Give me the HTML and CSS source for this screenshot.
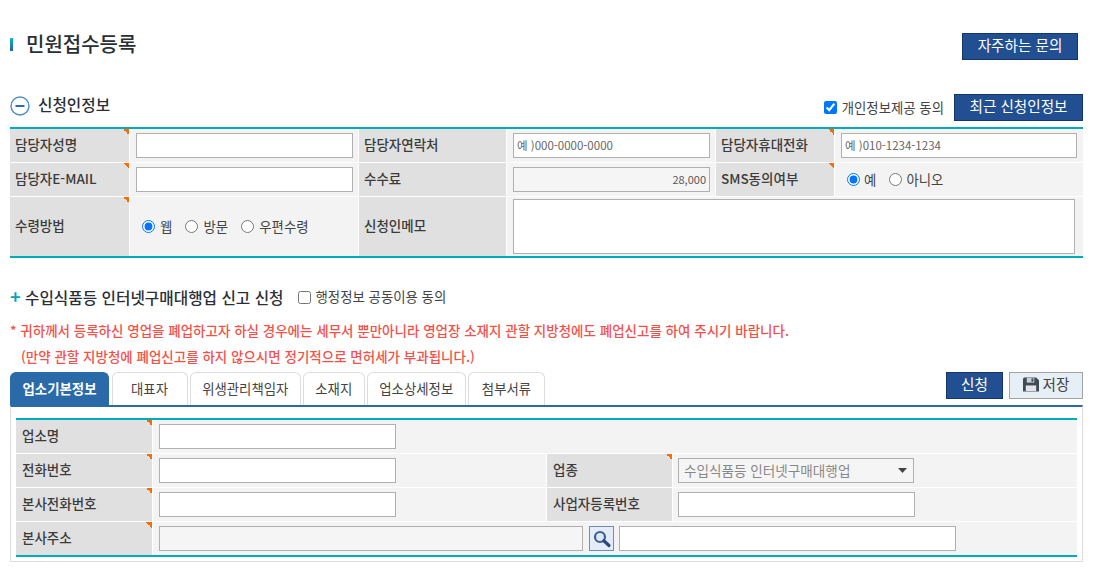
FILE: index.html
```html
<!DOCTYPE html>
<html lang="ko">
<head>
<meta charset="utf-8">
<title>민원접수등록</title>
<link rel="stylesheet" href="styles.css">
</head>
<body>
<div class="page">
  <header class="page-head">
    <h1 class="page-title"><span class="title-bar"></span>민원접수등록</h1>
    <button class="btn btn-navy btn-faq" type="button">자주하는 문의</button>
  </header>

  <section class="applicant">
    <div class="section-head">
      <h2 class="section-title">
        <svg class="minus-icon" width="20" height="20" viewBox="0 0 20 20"><circle cx="10" cy="10" r="9" fill="#fff" stroke="#4f8fcb" stroke-width="1.4"/><rect x="5.5" y="9" width="9" height="2" fill="#2b6cb0"/></svg>
        <span class="title-text">신청인정보</span>
      </h2>
      <div class="section-actions">
        <label class="opt opt-check"><input type="checkbox" checked>개인정보제공 동의</label>
        <button class="btn btn-navy btn-recent" type="button">최근 신청인정보</button>
      </div>
    </div>
    <table class="form-table table-a">
      <colgroup><col class="a1"><col class="a2"><col class="a3"><col class="a4"><col class="a5"><col></colgroup>
      <tr>
        <th class="req">담당자성명</th>
        <td><input class="field w-217" type="text"></td>
        <th>담당자연락처</th>
        <td><input class="field w-197 hint" type="text" placeholder="예 )000-0000-0000"></td>
        <th class="req">담당자휴대전화</th>
        <td><input class="field w-236 hint" type="text" placeholder="예 )010-1234-1234"></td>
      </tr>
      <tr>
        <th class="req">담당자E-MAIL</th>
        <td><input class="field w-217" type="text"></td>
        <th>수수료</th>
        <td><input class="field w-197 readonly amount" type="text" value="28,000" readonly></td>
        <th class="req">SMS동의여부</th>
        <td class="radios radios-sms">
          <label class="opt"><input type="radio" name="sms" checked>예</label>
          <label class="opt"><input type="radio" name="sms">아니오</label>
        </td>
      </tr>
      <tr class="row-tall">
        <th class="req">수령방법</th>
        <td class="radios radios-way">
          <label class="opt"><input type="radio" name="way" checked>웹</label>
          <label class="opt"><input type="radio" name="way">방문</label>
          <label class="opt"><input type="radio" name="way">우편수령</label>
        </td>
        <th>신청인메모</th>
        <td colspan="3"><textarea class="memo"></textarea></td>
      </tr>
    </table>
  </section>

  <section class="report">
    <div class="report-head">
      <span class="plus">+</span>
      <h2 class="report-title">수입식품등 인터넷구매대행업 신고 신청</h2>
      <label class="opt opt-check opt-share"><input type="checkbox">행정정보 공동이용 동의</label>
    </div>
    <p class="notice">* 귀하께서 등록하신 영업을 폐업하고자 하실 경우에는 세무서 뿐만아니라 영업장 소재지 관할 지방청에도 폐업신고를 하여 주시기 바랍니다.</p>
    <p class="notice notice-sub">(만약 관할 지방청에 폐업신고를 하지 않으시면 정기적으로 면허세가 부과됩니다.)</p>

    <div class="tab-row">
      <ul class="tabs">
        <li class="tab active t1">업소기본정보</li>
        <li class="tab t2">대표자</li>
        <li class="tab t3">위생관리책임자</li>
        <li class="tab t4">소재지</li>
        <li class="tab t5">업소상세정보</li>
        <li class="tab t6">첨부서류</li>
      </ul>
      <div class="tab-actions">
        <button class="btn btn-navy btn-submit" type="button">신청</button>
        <button class="btn btn-save" type="button">
          <svg width="16" height="15" viewBox="0 0 17 15"><path d="M1 0h13l3 3v12H0V1z" fill="#3f4a55"/><rect x="4" y="0.5" width="8" height="5" fill="#c9d1d9"/><rect x="9" y="1" width="2" height="3.5" fill="#3f4a55"/><rect x="3" y="8.5" width="11" height="6" fill="#dfe5ea"/></svg>
          저장
        </button>
      </div>
    </div>

    <div class="panel">
      <table class="form-table table-b">
        <colgroup><col class="b1"><col class="b2"><col class="b3"><col></colgroup>
        <tr>
          <th class="req">업소명</th>
          <td colspan="3"><input class="field w-237" type="text"></td>
        </tr>
        <tr>
          <th class="req">전화번호</th>
          <td><input class="field w-237" type="text"></td>
          <th class="req">업종</th>
          <td class="td-right"><select class="field w-236 sel" disabled><option>수입식품등 인터넷구매대행업</option></select></td>
        </tr>
        <tr>
          <th class="req">본사전화번호</th>
          <td><input class="field w-237" type="text"></td>
          <th>사업자등록번호</th>
          <td class="td-right"><input class="field w-237" type="text"></td>
        </tr>
        <tr>
          <th class="req">본사주소</th>
          <td colspan="3">
            <div class="addr">
              <input class="field w-424 readonly" type="text" readonly>
              <button class="search-btn" type="button" aria-label="검색">
                <svg width="20" height="20" viewBox="0 0 20 20"><circle cx="8" cy="8" r="5" fill="#dbe8f6" stroke="#3d5f8f" stroke-width="2.2"/><path d="M11.8 11.8L17 16.5" stroke="#2b4a7a" stroke-width="3.2" stroke-linecap="round"/></svg>
              </button>
              <input class="field w-337" type="text">
            </div>
          </td>
        </tr>
      </table>
    </div>
  </section>
</div>
</body>
</html>
```

FILE: styles.css
```css
* { box-sizing: border-box; }
html, body { margin: 0; padding: 0; background: #fff; }
body {
  font-family: "Noto Sans CJK KR", "Noto Sans", sans-serif;
  color: #333;
  font-size: 13px;
  overflow: hidden;
}
.page { width: 1093px; height: 570px; padding: 33px 10px 0; }

.page-head { display: flex; justify-content: space-between; align-items: flex-start; height: 61px; padding-right: 5px; }
.page-title { display: flex; align-items: center; margin: 0; font-size: 20px; font-weight: 500; color: #2a2f36; height: 22px; line-height: 22px; }
.title-bar { width: 3px; height: 13px; margin-right: 13px; background: linear-gradient(#00bcd0, #2a5f9e); }

.btn { font-family: inherit; font-size: 14.6px; border-radius: 0; cursor: pointer; padding: 0 0 2px; line-height: 1; }
.btn-navy { background: #214f91; border: 1px solid #12356b; color: #fff; }
.btn-faq { width: 116px; height: 27px; }
.btn-recent { width: 129px; height: 27px; }
.btn-submit { width: 57px; height: 27px; }
.btn-save { display: flex; align-items: center; justify-content: center; gap: 4px; width: 74px; height: 27px; background: #e6eef6; border: 1px solid #a3a3a3; color: #444; }

.section-head { display: flex; justify-content: space-between; align-items: center; height: 27px; margin-bottom: 6px; }
.section-title { display: flex; align-items: center; gap: 8px; margin: 0; padding-bottom: 3px; font-size: 15.7px; font-weight: 500; color: #2a2f36; }
.title-text { padding-bottom: 4px; }
.section-actions { display: flex; align-items: center; gap: 10px; }

.opt { display: inline-flex; align-items: center; font-size: 13.4px; color: #444; }
.opt input { margin: 0 4px 0 0; width: 13px; height: 13px; }
.opt-check { padding-bottom: 2px; }
.opt-check input { margin: 2px 5px 0 0; }

.form-table { width: 100%; table-layout: fixed; border-collapse: separate; border-spacing: 0; border-top: 2px solid #00acbb; border-bottom: 2px solid #00acbb; }
.form-table th, .form-table td { padding: 0; border-right: 1px solid #fff; border-bottom: 1px solid #fff; }
.form-table tr:last-child th, .form-table tr:last-child td { border-bottom: 0; }
.form-table tr > :last-child { border-right: 0; }
.form-table th { text-align: left; padding: 0 0 3px 5px; font-size: 13.5px; font-weight: 500; color: #3b3b3b; background: #e0e0e0; }
.form-table td { background: #f3f3f3; padding-left: 6px; }
.form-table th.req { background: linear-gradient(to bottom left, #ff6a00 50%, transparent 50%) top right / 6px 6px no-repeat, #e0e0e0; }
.form-table tr { height: 34px; }

.table-a col.a1 { width: 120px; }
.table-a col.a2 { width: 229px; }
.table-a col.a3 { width: 148px; }
.table-a col.a4 { width: 209px; }
.table-a col.a5 { width: 119px; }
.table-a .row-tall { height: 59px; }

.table-b col.b1 { width: 137px; }
.table-b col.b2 { width: 394px; }
.table-b col.b3 { width: 126px; }
.table-b tr:last-child { height: 33px; }
.form-table.table-b th { padding-left: 6px; }
.form-table td.td-right { padding-left: 5px; }

.field { display: block; height: 25px; border: 1px solid #b0b0b0; background: #fff; padding: 0 3px 1px; font-family: inherit; font-size: 12px; color: #555; border-radius: 0; outline: 0; }
.field::placeholder { color: #666; opacity: 1; }
.hint { font-size: 11.5px; }
.readonly { background: #f5f5f5; }
.amount { text-align: right; font-size: 11px; }
.w-217 { width: 217px; }
.w-197 { width: 197px; }
.w-236 { width: 236px; }
.w-237 { width: 237px; }
.w-424 { width: 424px; }
.w-337 { width: 337px; }
.memo { display: block; width: 562px; height: 55px; border: 1px solid #b0b0b0; background: #fff; resize: none; margin: 1px 0; outline: 0; }

.form-table td.radios { padding-left: 12px; }
.radios .opt { margin-right: 9.5px; }
.radios-way .opt input { margin-right: 5px; }

.report { margin-top: 27px; }
.report-head { display: flex; align-items: center; height: 24px; }
.plus { width: 15px; padding-bottom: 3px; font-size: 18px; font-weight: 700; color: #00a7b8; line-height: 1; }
.report-title { margin: 0; font-size: 15.7px; font-weight: 500; color: #2a2f36; }
.opt-share { margin-left: 14px; }

.notice { margin: 14px 0 0; height: 14px; line-height: 14px; font-size: 13.5px; font-weight: 500; color: #f4504a; white-space: nowrap; }
.notice-sub { margin-top: 12px; padding-left: 11px; }

.tab-row { display: flex; justify-content: space-between; align-items: flex-start; height: 33px; margin-top: 9px; }
.tabs { display: flex; gap: 2.5px; list-style: none; margin: 0; padding: 0; }
.tab { display: flex; align-items: center; justify-content: center; height: 33px; padding-bottom: 3px; border: 1px solid #ddd; border-bottom: 0; border-radius: 6px 6px 0 0; background: #fff; font-size: 13.4px; color: #444; }
.tab.active { background: #2a6aa9; border-color: #2a6aa9; color: #fff; font-weight: 700; font-size: 13.4px; }
.t1 { width: 99px; }
.t2 { width: 76px; }
.t3 { width: 110.5px; }
.t4 { width: 61.5px; }
.t5 { width: 98.5px; }
.t6 { width: 77px; }
.tab-actions { display: flex; gap: 6px; }

.panel { height: 157px; padding: 11px 5px 0; border: 1px solid #ddd; border-top: 2px solid #2a6aa9; }

.addr { display: flex; align-items: center; gap: 5px; }
.addr .search-btn { margin-left: 1px; }
.search-btn { display: flex; align-items: center; justify-content: center; width: 25px; height: 25px; padding: 0; background: #e3ecf8; border: 1px solid #6f8db8; }
.sel { appearance: none; -webkit-appearance: none; opacity: 1; padding-left: 5px; font-size: 13.6px; color: #888; background: #f5f5f5 url("data:image/svg+xml,%3Csvg xmlns='http://www.w3.org/2000/svg' width='9' height='5'%3E%3Cpath d='M0 0h9L4.5 5z' fill='%23444'/%3E%3C/svg%3E") no-repeat right 6px center; }
```
